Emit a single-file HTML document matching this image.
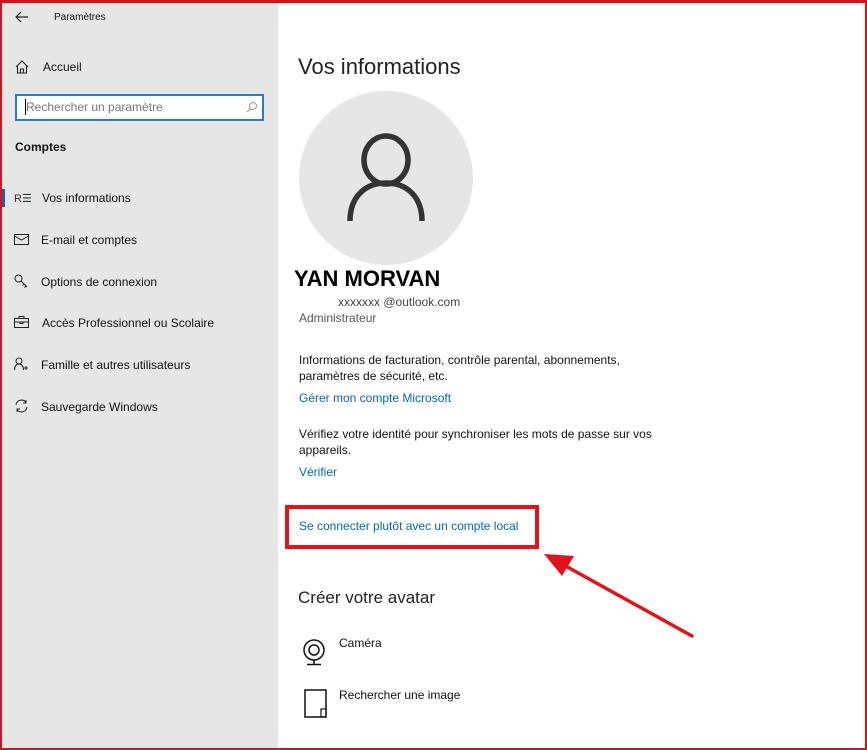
<!DOCTYPE html>
<html><head><meta charset="utf-8"><style>
*{margin:0;padding:0;box-sizing:border-box}
body{width:867px;height:750px;overflow:hidden;font-family:"Liberation Sans",sans-serif;position:relative;background:#fff}
.frame{position:absolute;inset:0;border:2px solid #d0161c;border-top-width:3px;pointer-events:none;z-index:5}
.side{position:absolute;left:0;top:0;width:278px;height:750px;background:#e6e6e6}
.t{position:absolute;color:#111;white-space:nowrap}
.ic{position:absolute}
a{color:#0067b8;text-decoration:none}
</style></head><body>
<div class="side">
  <svg class="ic" style="left:15px;top:11px" width="14" height="12" viewBox="0 0 14 12"><path d="M13 6H2M6 1L1 6l5 5" stroke="#222" fill="none" stroke-width="1.2"/></svg>
  <div class="t" style="left:54px;top:12px;font-size:10px">Paramètres</div>
  <svg class="ic" style="left:15px;top:60px" width="14" height="14" viewBox="0 0 14 14"><path d="M1 7L7 1l6 6M2.5 5.5V13h9V5.5M5.5 13V9h3v4" stroke="#222" fill="none" stroke-width="1.1"/></svg>
  <div class="t" style="left:43px;top:60px;font-size:12px">Accueil</div>
  <div style="position:absolute;left:15px;top:94px;width:249px;height:27px;background:#fff;border:2px solid #2a7ac6"></div>
  <div style="position:absolute;left:25px;top:99px;width:1px;height:16px;background:#000"></div>
  <div class="t" style="left:26px;top:100px;font-size:12px;color:#777">Rechercher un paramètre</div>
  <svg class="ic" style="left:246px;top:101px" width="12" height="12" viewBox="0 0 12 12"><circle cx="7" cy="5" r="3.5" stroke="#999" fill="none"/><path d="M4.5 7.5L1 11" stroke="#999"/></svg>
  <div class="t" style="left:15px;top:140px;font-size:12px;font-weight:bold">Comptes</div>
  <div style="position:absolute;left:2px;top:189px;width:3px;height:18px;background:#1f5fa8"></div>
  <div class="t" style="left:14px;top:192px;font-size:11px;color:#333">R☰</div>
  <div class="t" style="left:42px;top:191px;font-size:12px">Vos informations</div>
  <svg class="ic" style="left:14px;top:234px" width="15" height="11" viewBox="0 0 15 11"><rect x="0.5" y="0.5" width="14" height="10" stroke="#222" fill="none"/><path d="M0.5 2L7.5 6l7-4" stroke="#222" fill="none"/></svg>
  <div class="t" style="left:41px;top:233px;font-size:12px">E-mail et comptes</div>
  <svg class="ic" style="left:14px;top:274px" width="14" height="14" viewBox="0 0 14 14"><circle cx="4.5" cy="4.5" r="3.5" stroke="#222" fill="none"/><path d="M7 7l6 6M10 10l-1.5 1.5M12 12l-1.5 1.5" stroke="#222" fill="none"/></svg>
  <div class="t" style="left:41px;top:275px;font-size:12px">Options de connexion</div>
  <svg class="ic" style="left:14px;top:316px" width="15" height="12" viewBox="0 0 15 12"><rect x="0.5" y="2.5" width="14" height="9" stroke="#222" fill="none"/><path d="M5 2.5V0.5h5v2M0.5 6h14M6 6v1.5h3V6" stroke="#222" fill="none"/></svg>
  <div class="t" style="left:42px;top:316px;font-size:12px">Accès Professionnel ou Scolaire</div>
  <svg class="ic" style="left:14px;top:357px" width="16" height="14" viewBox="0 0 16 14"><circle cx="5" cy="4" r="3" stroke="#222" fill="none"/><path d="M0.5 13c0-4 2-6 4.5-6s4.5 2 4.5 6M12 9v4M10 11h4" stroke="#222" fill="none"/></svg>
  <div class="t" style="left:41px;top:358px;font-size:12px">Famille et autres utilisateurs</div>
  <svg class="ic" style="left:14px;top:399px" width="15" height="14" viewBox="0 0 15 14"><path d="M2 6a5.5 5.5 0 0 1 10-2.5M13 8a5.5 5.5 0 0 1-10 2.5M12 1v3h-3M3 13v-3h3" stroke="#222" fill="none"/></svg>
  <div class="t" style="left:41px;top:400px;font-size:12px">Sauvegarde Windows</div>
</div>

<div class="t" style="left:298px;top:54px;font-size:22px;color:#222">Vos informations</div>
<div style="position:absolute;left:299px;top:91px;width:174px;height:174px;border-radius:50%;background:#e6e6e6"></div>
<svg class="ic" style="left:299px;top:91px" width="174" height="174" viewBox="0 0 174 174"><ellipse cx="87" cy="69" rx="22" ry="24" stroke="#333" stroke-width="5.5" fill="none"/><path d="M51 130c0-24 15-38 36-38s36 14 36 38" stroke="#333" stroke-width="5.5" fill="none"/></svg>
<div class="t" style="left:294px;top:266px;font-size:22px;font-weight:bold;color:#000">YAN MORVAN</div>
<div class="t" style="left:338px;top:295px;font-size:12px;color:#444">xxxxxxx @outlook.com</div>
<div class="t" style="left:299px;top:311px;font-size:12px;color:#555">Administrateur</div>
<div class="t" style="left:299px;top:352px;font-size:12px;line-height:16px">Informations de facturation, contrôle parental, abonnements,<br>paramètres de sécurité, etc.</div>
<div class="t" style="left:299px;top:391px;font-size:12px"><a>Gérer mon compte Microsoft</a></div>
<div class="t" style="left:299px;top:426px;font-size:12px;line-height:16px">Vérifiez votre identité pour synchroniser les mots de passe sur vos<br>appareils.</div>
<div class="t" style="left:299px;top:465px;font-size:12px"><a>Vérifier</a></div>
<div style="position:absolute;left:285px;top:505px;width:254px;height:44px;border:4px solid #e0141a"></div>
<div class="t" style="left:299px;top:519px;font-size:12px"><a>Se connecter plutôt avec un compte local</a></div>
<svg class="ic" style="left:540px;top:548px" width="160" height="95" viewBox="0 0 160 95"><path d="M152 88L22 16" stroke="#e0141a" stroke-width="3.5" stroke-linecap="round"/><path d="M4 6L34 8 22 28z" fill="#e0141a"/></svg>
<div class="t" style="left:298px;top:588px;font-size:17px;color:#222">Créer votre avatar</div>
<svg class="ic" style="left:302px;top:638px" width="24" height="28" viewBox="0 0 24 28"><circle cx="12" cy="12" r="10" stroke="#111" stroke-width="1.5" fill="none"/><circle cx="12" cy="12" r="5" stroke="#111" stroke-width="1.5" fill="none"/><path d="M12 22v4M5 26.5h14" stroke="#111" stroke-width="1.5"/></svg>
<div class="t" style="left:339px;top:636px;font-size:12px">Caméra</div>
<svg class="ic" style="left:304px;top:689px" width="24" height="30" viewBox="0 0 24 30"><path d="M1 1h21v27H1z" stroke="#111" stroke-width="1.5" fill="none"/><rect x="17" y="20" width="5" height="8" stroke="#111" stroke-width="1.2" fill="none"/></svg>
<div class="t" style="left:339px;top:688px;font-size:12px">Rechercher une image</div>
<div class="frame"></div>
</body></html>
